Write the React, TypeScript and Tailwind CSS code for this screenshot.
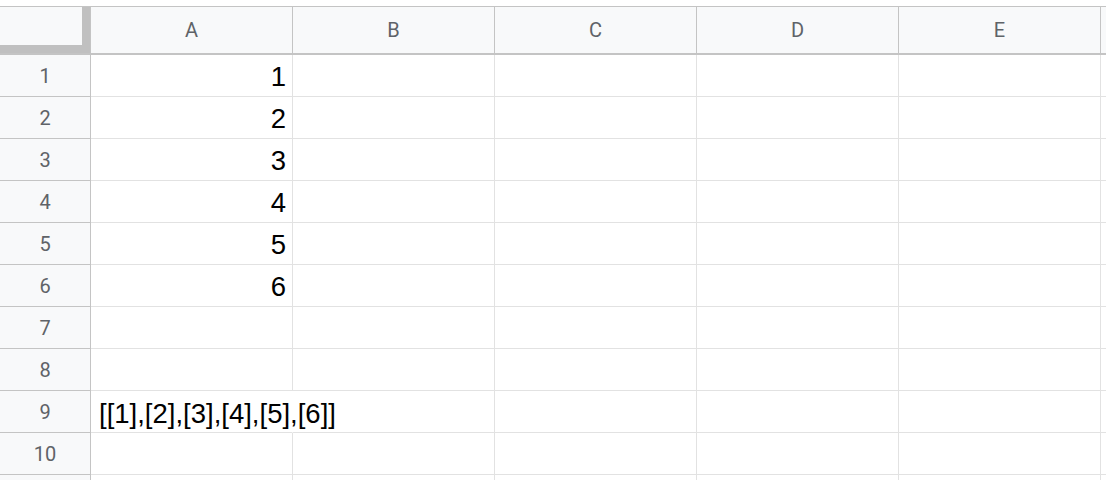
const COLS = ["A", "B", "C", "D", "E", ""];

const VALUES: Record<number, string> = {
  1: "1",
  2: "2",
  3: "3",
  4: "4",
  5: "5",
  6: "6",
};

function HeaderRow() {
  return (
    <div className="flex h-[49px] border-t border-b-2 border-[#c4c4c4] bg-[#f8f9fa]">
      {/* corner with freeze handles */}
      <div className="relative w-[91px] shrink-0 border-r border-[#c4c4c4]">
        <div className="absolute right-0 top-0 h-full w-[8px] bg-[#c0c0c0]" />
        <div className="absolute bottom-0 left-0 h-[8px] w-full bg-[#c0c0c0]" />
      </div>
      {COLS.map((c, i) => (
        <div
          key={i}
          className="flex w-[202px] shrink-0 items-center justify-center border-r border-[#c4c4c4] text-[20px] text-[#5f6368]"
          style={{ fontFamily: "Roboto, sans-serif" }}
        >
          {c}
        </div>
      ))}
    </div>
  );
}

function Row({ n }: { n: number }) {
  const value = VALUES[n];
  return (
    <div className="flex h-[42px] shrink-0">
      <div
        className="flex w-[91px] shrink-0 items-center justify-center border-r border-b border-[#c4c4c4] bg-[#f8f9fa] text-[20px] text-[#5f6368]"
        style={{ fontFamily: "Roboto, sans-serif" }}
      >
        {n <= 10 ? n : ""}
      </div>
      {COLS.map((_, i) => (
        <div
          key={i}
          className="relative flex w-[202px] shrink-0 items-center justify-end border-b border-[#e2e2e2] px-[6px] text-[27.5px] text-black"
          style={{
            fontFamily: '"Liberation Sans", Arial, sans-serif',
            borderRight: n === 9 && i === 0 ? "1px solid transparent" : "1px solid #e2e2e2",
          }}
        >
          {i === 0 && value && <span className="pt-[3px]">{value}</span>}
          {i === 0 && n === 9 && (
            <span className="absolute left-[8px] top-1/2 -translate-y-1/2 whitespace-nowrap pt-[4px]">
              [[1],[2],[3],[4],[5],[6]]
            </span>
          )}
        </div>
      ))}
    </div>
  );
}

export default function App() {
  return (
    <div className="h-[480px] w-[1106px] overflow-hidden bg-white pt-[6px]">
      <HeaderRow />
      {Array.from({ length: 11 }, (_, i) => (
        <Row key={i} n={i + 1} />
      ))}
    </div>
  );
}
